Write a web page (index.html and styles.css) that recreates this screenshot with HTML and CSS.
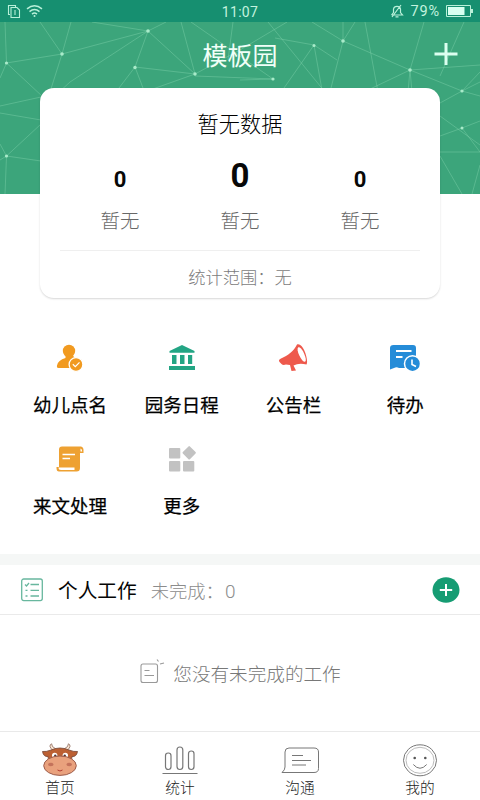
FILE: index.html
```html
<!DOCTYPE html>
<html lang="zh-CN">
<head>
<meta charset="utf-8">
<title>模板园</title>
<link rel="stylesheet" href="styles.css">
</head>
<body>
<div class="app">
  <header class="status">
    <svg class="status-left" viewBox="0 0 46 22" width="46" height="22" fill="none" stroke="#b9f0d9" stroke-width="1.1">
      <path d="M10 14.500H8.500V5.500H15.500V7"/><path d="M11 7.500H17L19.500 10V17.500H11Z"/><path d="M15 10v5"/>
      <g stroke-width="1.500"><path d="M27 8.800q7.500-6 15 0M29.500 11.600q5-4 10 0M32 14.100q2.500-2 5 0"/></g><circle cx="34.500" cy="16" r="1" fill="#b9f0d9" stroke="none"/>
    </svg>
    <span class="clock">11:07</span>
    <div class="status-right">
      <svg width="14" height="14" viewBox="0 0 14 14" fill="none" stroke="#b9f0d9" stroke-width="1.200"><path d="M1.500 11H12.500L10.500 8.500V5Q10 2.300 7 2.300T3.500 5V8.500L1.500 11M5.500 12.800h3M2 13L11 1"/></svg>
      <span>79%</span>
      <svg width="27" height="12" viewBox="0 0 27 12"><path d="M.5.500H24.500V11.500H.5Z" fill="none" stroke="#b9f0d9"/><path d="M2 2H18.500V10H2Z" fill="#d8fff0"/><path d="M25 4h2v4h-2z" fill="#b9f0d9"/></svg>
    </div>
  </header>

  <section class="hero">
    <svg class="mesh" viewBox="0 22 480 172" width="480" height="172">
      <g fill="none" stroke="#83d5ae" stroke-opacity=".42" stroke-width="1">
        <path d="M5 22L6.500 63L62 54L148 31L70 82L45 105M6.500 63L0 78M6.500 63L43 97M40 22L62 54L71 22M62 54L50 92M92 22L148 31L166 22M148 31L135 67L195 74L148 31M135 67L119 88M135 67L143 88M195 74L181 22M195 74L150 90M195 74L240 50L287 22M191 22L273 79L195 76M233 22L228 60M273 79L240 80"/>
        <path d="M268 22L325 92M275 38L314 45L337 60M314 45L284 88M314 45L322 90M312 22L343 41L355 22M343 41L410 70L462 91L480 96M343 41L331 88M343 22L343 41M365 22L378 92M424 22L410 70L408 92M410 70L368 90M410 70L480 65M410 70L412 92M464 22L440 76M480 72L462 91L440 103M462 91L480 82"/>
        <path d="M0 106L41 97M0 113L41 120M41 124L6.500 156L5 194M0 144L6.500 156L0 160M6.500 156L41 161M440 116L480 145M440 136L462 128L480 121M462 128L480 152M440 152H480M440 156L462 194M472 194L480 165"/>
      </g>
      <g fill="#a9ebca"><circle cx="6.500" cy="63" r="1.600"/><circle cx="62" cy="54" r="1.800"/><circle cx="148" cy="31" r="1.800"/><circle cx="135" cy="67.500" r="1.700"/><circle cx="195" cy="74" r="1.700"/><circle cx="273" cy="79" r="1.600"/><circle cx="314" cy="45.500" r="1.500"/><circle cx="343" cy="41" r="1.800"/><circle cx="410" cy="70" r="1.800"/><circle cx="462" cy="91" r="1.600"/><circle cx="6.500" cy="156" r="1.600"/><circle cx="462" cy="128" r="1.500"/></g>
    </svg>
    <div class="titlebar">
      <h1>模板园</h1>
      <svg class="add" width="24" height="24" viewBox="0 0 24 24" stroke="#dcfff0" stroke-width="3"><path d="M12 0V22M0.500 11H23.500"/></svg>
    </div>
    <div class="card">
      <h2>暂无数据</h2>
      <div class="stats">
        <div class="stat"><b>0</b><span>暂无</span></div>
        <div class="stat main"><b>0</b><span>暂无</span></div>
        <div class="stat"><b>0</b><span>暂无</span></div>
      </div>
      <p class="range">统计范围：无</p>
    </div>
  </section>

  <nav class="menu">
    <a><svg width="30" height="30" viewBox="0 0 30 30"><circle cx="14" cy="8" r="6.200" fill="#f19a20"/><path d="M10.500 12H17.500L20.500 16V25H3.500Q1.500 25 2 22.500Q3 17 10.500 15Z" fill="#f19a20"/><circle cx="21" cy="21.500" r="6.900" fill="#f19a20" stroke="#fff" stroke-width="1.300"/><path d="M17.800 21.300L20.300 23.700L24.500 19.300" fill="none" stroke="#fff" stroke-width="1.200"/></svg><span>幼儿点名</span></a>
    <a><svg width="30" height="30" viewBox="0 0 30 30" fill="#23a584"><path d="M15 2L27.500 8V9.800H2.500V8ZM5 12H9.500V21H5ZM13 12H17.500V21H13ZM21 12H25.200V21H21ZM2 23H28V27H2Z"/></svg><span>园务日程</span></a>
    <a><svg width="30" height="30" viewBox="0 0 30 30"><path d="M19 1.500C16 8 10 12.500 3 15.500Q-.5 17 2 19.500L3.500 21Q5 22.500 8 21.500L12 22L13.500 28L18 27.500L15.500 22.500Q21 19.500 28.500 21.500C31 17 25 -1 19 1.500Z" fill="#ee594c"/><ellipse cx="23.700" cy="11.500" rx="2.600" ry="8" transform="rotate(-25 23.700 11.500)" fill="#fff"/></svg><span>公告栏</span></a>
    <a><svg width="32" height="30" viewBox="0 0 32 30"><path d="M4.500 2H24Q27 2 27 5V25H10Q7.500 23.500 5 25L1 26.500V5Q1 2 4.500 2Z" fill="#258cd8"/><path d="M7 8H22.500M7 14H13.500" stroke="#fff" stroke-width="1.800"/><circle cx="23.500" cy="20.700" r="8" fill="#258cd8" stroke="#fff" stroke-width="1.500"/><path d="M23 16.500V21.500L27 23.500" fill="none" stroke="#fff" stroke-width="1.600"/></svg><span>待办</span></a>
    <a><svg width="30" height="30" viewBox="0 0 30 30"><path d="M7 2.500H26Q28.500 3 28.500 6V9H25V24Q25 27.500 21.500 27.500H4Q1.500 27.500 1.500 24V23H4V5.500Q4 2.500 7 2.500Z" fill="#eea132"/><path d="M7.500 10.500H20M7.500 14.500H15" stroke="#fff" stroke-width="1.700"/><path d="M3.500 23.500H19.500V26H6Q3.500 26 3.500 23.500ZM25.500 4.500Q27.200 5 27.200 7.500H25.500Z" fill="#fff"/></svg><span>来文处理</span></a>
    <a><svg width="30" height="30" viewBox="0 0 30 30" fill="#c2c2c2"><rect x="2" y="4" width="11.300" height="10.500" rx="1"/><rect x="2" y="17" width="11.300" height="10.500" rx="1"/><rect x="16" y="17" width="11.300" height="10.500" rx="1"/><rect x="17.200" y="3.800" width="10" height="10" rx="1" transform="rotate(45 22.200 8.800)"/></svg><span>更多</span></a>
  </nav>

  <section class="work">
    <div class="work-head">
      <svg width="22" height="24" viewBox="0 0 22 24" fill="none" stroke="#68b79e" stroke-width="1.300"><rect x=".7" y="1" width="20.600" height="21.600" rx="2"/><path d="M4 6.500L5.500 8L8 5M9.500 6.500H18M9.500 12.300H18M9.500 18H18M4.500 12.300H6.500M4.500 18H6.500"/></svg>
      <h3>个人工作</h3>
      <span class="undone">未完成：<span class="count">0</span></span>
      <svg class="plus" width="28" height="28" viewBox="0 0 28 28"><ellipse cx="14" cy="14" rx="13.500" ry="12.800" fill="#169c73"/><path d="M14 8V20M7.800 14H20.200" stroke="#fff" stroke-width="2"/></svg>
    </div>
    <div class="empty">
      <svg width="26" height="26" viewBox="0 0 26 26" fill="none" stroke="#999" stroke-width="1.100"><rect x="2" y="5" width="16.500" height="18.500" rx="2"/><path d="M5.500 11.500H10.500M5.500 16.500H15M18 .5L19.500 2.500M21 5L25 4"/></svg>
      <span>您没有未完成的工作</span>
    </div>
  </section>

  <nav class="tabs">
    <a><svg width="36" height="34" viewBox="0 0 36 34"><path d="M10.500 7Q6 3 9.500 .7Q9.500 4 14 6M25.500 7Q30 3 26.500 .7Q26.500 4 22 6" fill="#f8e5d2" stroke="#8d6759" stroke-width=".8"/><path d="M9 7Q18 3 27 7Q32 9 35.500 8.500Q34.500 14 30 13.500Q29 18 30 21H6Q7 18 6 13.500Q1.500 14 .5 8.500Q4 9 9 7Z" fill="#bc6033" stroke="#744434" stroke-width=".8"/><circle cx="12.700" cy="12.500" r="2.700" fill="#fff"/><circle cx="23.300" cy="12.500" r="2.700" fill="#fff"/><circle cx="13.300" cy="12.800" r="1.200" fill="#533"/><circle cx="22.700" cy="12.800" r="1.200" fill="#533"/><ellipse cx="18" cy="22.700" rx="16.300" ry="9.700" fill="#e9a17d" stroke="#9c5d4c" stroke-width="1"/><ellipse cx="8.800" cy="21.500" rx="2.800" ry="1.800" fill="#c4725b"/><ellipse cx="27.200" cy="21.500" rx="2.800" ry="1.800" fill="#c4725b"/><path d="M15.500 27Q18 29 20.500 27" fill="none" stroke="#b33d32"/></svg><span>首页</span></a>
    <a><svg width="36" height="34" viewBox="0 0 36 34" fill="none" stroke="#777" stroke-width="1.200"><rect x="3.500" y="10" width="5.500" height="16.500" rx="2.700"/><rect x="15" y="4" width="5.800" height="22.500" rx="2.900"/><rect x="26.500" y="8" width="5.500" height="18.500" rx="2.700"/><path d="M.5 30.500H35.500"/></svg><span>统计</span></a>
    <a><svg width="38" height="34" viewBox="0 0 38 34" fill="none" stroke="#777" stroke-width="1"><path d="M1 29.500Q4 27 4 24V9Q4 5 8 5H33Q37.500 5 37.500 9V25.500Q37.500 29.500 33 29.500Z"/><path d="M11 12.500H22M11 17.500H30M11 22H25"/></svg><span>沟通</span></a>
    <a><svg width="36" height="34" viewBox="0 0 36 34" fill="none" stroke="#777" stroke-width="1"><ellipse cx="18" cy="17.300" rx="16.500" ry="15.500"/><ellipse cx="18" cy="17.300" rx="14" ry="13" stroke="#aaa" stroke-width=".8"/><circle cx="12.700" cy="15" r="1.300" fill="#555" stroke="none"/><circle cx="23.300" cy="15" r="1.300" fill="#555" stroke="none"/><path d="M11.300 21.500Q18 29 24.700 21.500"/></svg><span>我的</span></a>
  </nav>
</div>
</body>
</html>
```
FILE: styles.css
```css
* { box-sizing: border-box; }
body {
  margin: 0;
  background: #fff;
  color: #111;
  font-family: "Noto Sans CJK SC", sans-serif;
  font-weight: 300;
}
svg { display: block; flex: none; }
h1, h2, h3, p { margin: 0; font-weight: 300; }
.app { width: 480px; height: 800px; display: flex; flex-direction: column; overflow: hidden; }

.status {
  height: 22px;
  display: grid;
  grid-template-columns: 1fr auto 1fr;
  align-items: center;
  background: #168f70;
  color: #c3f3df;
  font: 400 14px/22px Roboto, sans-serif;
  letter-spacing: .3px;
}
.clock { height: 22px; line-height: 24px; }
.status-right { display: flex; align-items: center; justify-content: flex-end; gap: 6px; padding-right: 7px; font-size: 14.500px; }
.status-right span { height: 22px; line-height: 24px; letter-spacing: .9px; }

.hero { position: relative; height: 276px; }
.mesh { position: absolute; top: 0; left: 0; background: #3ca57b; }
.titlebar { position: relative; height: 66px; display: grid; grid-template-columns: 1fr auto 1fr; align-items: center; color: #f0fff8; }
.titlebar h1 { grid-column: 2; font-size: 25px; line-height: 64px; height: 66px; font-weight: 400; }
.add { justify-self: end; margin-right: 22px; }
.card {
  position: relative;
  width: 400px;
  height: 210px;
  margin: 0 auto;
  padding: 0 20px;
  background: #fff;
  border-radius: 14px;
  box-shadow: 0 1px 2px rgba(0, 0, 0, .16);
  text-align: center;
}
.card h2 { height: 52px; padding-top: 19px; font-size: 21.200px; line-height: 32px; color: #000; }
.stats { display: grid; grid-template-columns: repeat(3, 120px); height: 111px; border-bottom: 1px solid #efefef; }
.stat { display: flex; flex-direction: column; align-items: center; }
.stat b { height: 66px; padding-top: 7px; font: 700 22px/66px Roboto, sans-serif; color: #080808; }
.stat.main b { padding-top: 3px; font-size: 33px; }
.stat span { font-size: 19.500px; line-height: 28px; color: #686868; }
.range { font-size: 17.300px; line-height: 52px; color: #7c7c7c; }

.menu { height: 256px; padding: 45px 19px 0 14px; display: grid; grid-template-columns: repeat(4, 111.800px); grid-auto-rows: 101px; }
.menu a { display: flex; flex-direction: column; align-items: center; gap: 16px; }
.menu span { font-size: 18.500px; line-height: 30px; font-weight: 400; color: #000; -webkit-text-stroke: .25px #000; }

.work { flex: 1; border-top: 11px solid #f5f7f6; }
.work-head { height: 50px; display: flex; align-items: center; padding: 0 20px 0 21px; border-bottom: 1px solid #eaeaea; }
.work-head h3 { margin-left: 15px; font-size: 19.700px; font-weight: 400; color: #050505; }
.undone { margin-left: 14px; font-size: 18.300px; color: #8c8c8c; }
.count { margin-left: 1px; font-family: Roboto, sans-serif; font-size: 19px; }
.plus { margin-left: auto; }
.empty { height: 114px; display: flex; align-items: center; justify-content: center; gap: 8px; font-size: 18.600px; color: #787878; }

.tabs { height: 69px; padding-top: 11px; border-top: 1px solid #e9e9e9; display: grid; grid-template-columns: repeat(4, 1fr); }
.tabs a { display: flex; flex-direction: column; align-items: center; }
.tabs span { font-size: 14.700px; line-height: 20px; color: #222; }
```
